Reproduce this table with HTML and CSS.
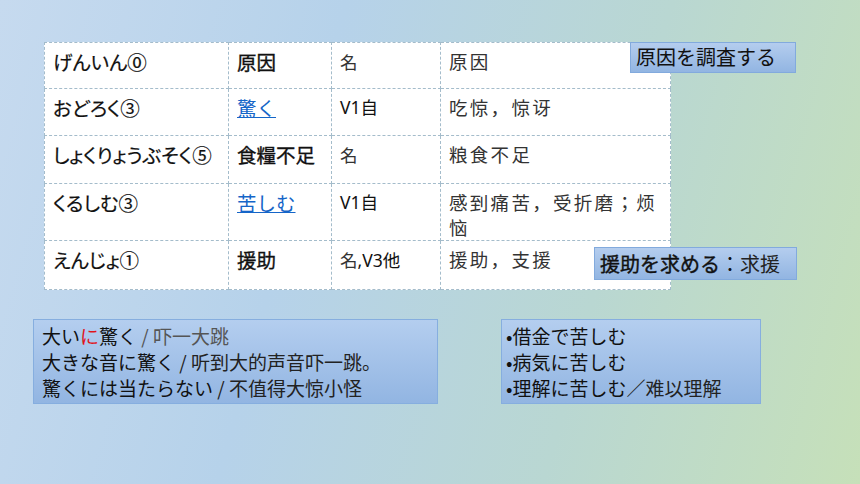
FILE: index.html
```html
<!DOCTYPE html>
<html lang="ja">
<head>
    <meta charset="UTF-8">
    <title>驚く・苦しむ</title>
    <link rel="stylesheet" href="styles.css">
</head>
<body>
    <div class="slide">
        <table class="vocab">
            <colgroup>
                <col class="c-read">
                <col class="c-word">
                <col class="c-pos">
                <col class="c-mean">
            </colgroup>
            <tr class="r1">
                <td class="read">げんいん⓪</td>
                <td class="word">原因</td>
                <td class="pos"><span class="zh">名</span></td>
                <td class="mean">原因</td>
            </tr>
            <tr class="r2">
                <td class="read">おどろく③</td>
                <td class="word"><a href="#">驚く</a></td>
                <td class="pos">V1自</td>
                <td class="mean">吃惊，惊讶</td>
            </tr>
            <tr class="r3">
                <td class="read">しょくりょうぶそく⑤</td>
                <td class="word">食糧不足</td>
                <td class="pos"><span class="zh">名</span></td>
                <td class="mean">粮食不足</td>
            </tr>
            <tr class="r4">
                <td class="read">くるしむ③</td>
                <td class="word"><a href="#">苦しむ</a></td>
                <td class="pos">V1自</td>
                <td class="mean">感到痛苦，受折磨；烦恼</td>
            </tr>
            <tr class="r5">
                <td class="read">えんじょ①</td>
                <td class="word">援助</td>
                <td class="pos"><span class="zh">名</span>,V3他</td>
                <td class="mean">援助，支援</td>
            </tr>
        </table>

        <div class="callout callout-cause">原因を調査する</div>
        <div class="callout callout-help"><b>援助を求める</b>：<span class="zh">求援</span></div>

        <div class="notes">
            <div class="note note-left">
                <p>大い<span class="red">に</span>驚く <span class="zh light">/ 吓一大跳</span></p>
                <p>大きな音に驚く <span class="zh">/ 听到大的声音吓一跳。</span></p>
                <p>驚くには当たらない <span class="zh">/ 不值得大惊小怪</span></p>
            </div>
            <div class="note note-right">
                <p>•借金で苦しむ</p>
                <p>•病気に苦しむ</p>
                <p>•理解に苦しむ<span class="zh">／难以理解</span></p>
            </div>
        </div>
    </div>
</body>
</html>
```

FILE: styles.css
```css
* {
    margin: 0;
    padding: 0;
    box-sizing: border-box;
}

body {
    width: 860px;
    height: 484px;
    overflow: hidden;
    font-family: "Noto Sans", "Noto Sans CJK JP", sans-serif;
    color: #111;
    background: linear-gradient(105deg, #c6daef 0%, #b6d2ea 35%, #b9d7d2 68%, #c6e0b9 100%);
}

.slide {
    position: relative;
    height: 484px;
    padding: 42px 0 0 33px;
}

.zh {
    font-family: "Noto Sans CJK SC", sans-serif;
    font-weight: normal;
    color: #333;
}

/* vocabulary table */
.vocab {
    margin-left: 11px;
    width: 626px;
    table-layout: fixed;
    border-collapse: collapse;
    background: #fff;
    font-size: 18px;
    line-height: 25px;
}

.c-read { width: 184px; }
.c-word { width: 103px; }
.c-pos  { width: 109px; }
.c-mean { width: 230px; }

.vocab td {
    border: 1px dashed #a4bccb;
    vertical-align: top;
    padding: 6px 4px 0 8px;
}

.r1 { height: 46px; }
.r2 { height: 47px; }
.r3 { height: 48px; }
.r4 { height: 57px; }
.r5 { height: 49px; }

.read {
    font-family: "Noto Sans CJK JP", sans-serif;
    font-feature-settings: "palt";
    font-size: 19.5px;
    white-space: nowrap;
    -webkit-text-stroke: 0.2px #111;
}

.word {
    font-family: "Noto Sans CJK JP", sans-serif;
    font-size: 19.5px;
    -webkit-text-stroke: 0.35px #111;
}

.word a {
    color: #1565c8;
    text-decoration: underline;
    -webkit-text-stroke: 0;
}

.pos {
    font-family: "Noto Sans", "Noto Sans CJK JP", sans-serif;
    font-size: 17.5px;
}

.mean {
    font-family: "Noto Sans CJK SC", sans-serif;
    font-size: 18.5px;
    letter-spacing: 2.3px;
    color: #333;
}

/* callouts over the table */
.callout {
    position: absolute;
    font-family: "Noto Sans CJK JP", sans-serif;
    font-size: 20px;
    line-height: 28px;
    padding: 0 5px;
    background: linear-gradient(#b4cdee, #92b5e2);
    border: 1px solid #82aadd;
    white-space: nowrap;
}

.callout-cause {
    left: 630px;
    top: 42px;
    width: 166px;
    height: 31px;
}

.callout-help {
    left: 594px;
    top: 247px;
    width: 203px;
    height: 33px;
    padding-top: 2px;
}

.callout-help b {
    font-weight: normal;
    -webkit-text-stroke: 0.4px #111;
}

.callout-help .zh {
    color: #222;
}

/* example boxes */
.notes {
    display: flex;
    gap: 63px;
    margin-top: 29px;
}

.note {
    background: linear-gradient(#b4ceef, #92b5e2);
    border: 1px solid #86aedf;
    font-family: "Noto Sans CJK JP", sans-serif;
    font-size: 19px;
    line-height: 26px;
    height: 85px;
    padding: 3px 4px 0 8px;
    white-space: nowrap;
}

.note-left { width: 405px; }
.note-right { width: 260px; padding-left: 4px; }

.note .zh { color: #222; }
.note .light { color: #555; }

.red { color: #e0141c; }
```
